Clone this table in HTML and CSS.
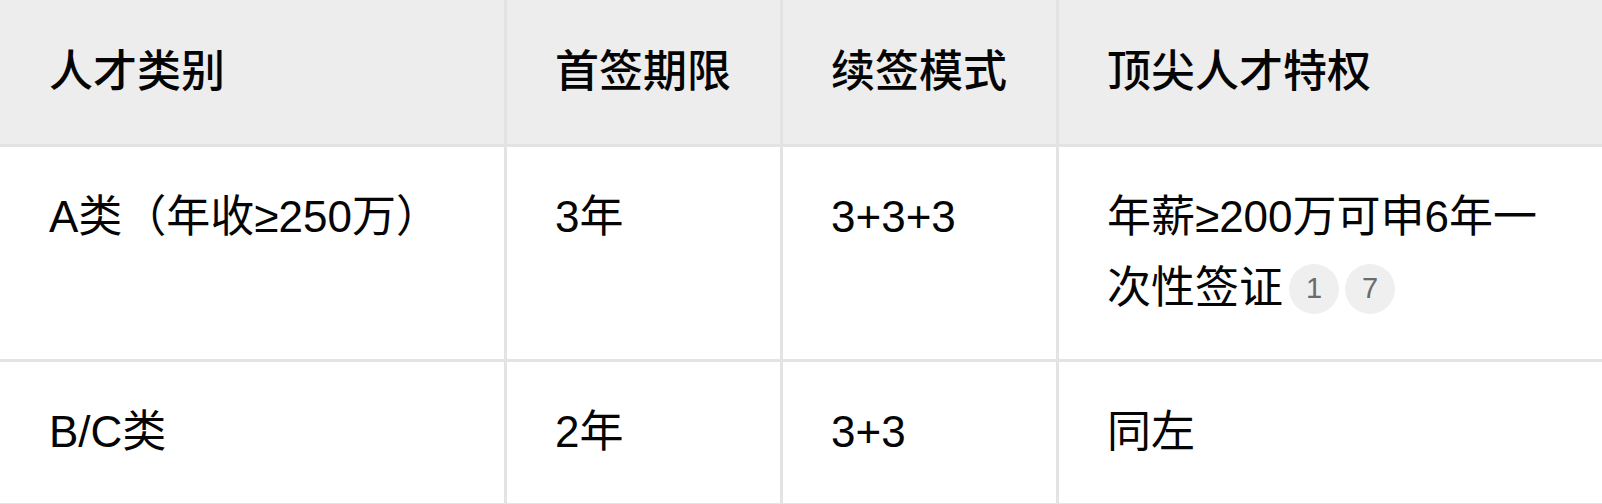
FILE: index.html
```html
<!DOCTYPE html>
<html lang="zh-CN">
<head>
<meta charset="utf-8">
<title>人才签证</title>
<link rel="stylesheet" href="styles.css">
</head>
<body>
<table class="visa-table">
  <colgroup>
    <col class="c1"><col class="c2"><col class="c3"><col class="c4">
  </colgroup>
  <thead>
    <tr>
      <th>人才类别</th>
      <th>首签期限</th>
      <th>续签模式</th>
      <th>顶尖人才特权</th>
    </tr>
  </thead>
  <tbody>
    <tr>
      <td>A类（年收≥250万）</td>
      <td>3年</td>
      <td>3+3+3</td>
      <td>年薪≥200万可申6年一次性签证<span class="cite">1</span><span class="cite">7</span></td>
    </tr>
    <tr>
      <td>B/C类</td>
      <td>2年</td>
      <td>3+3</td>
      <td>同左</td>
    </tr>
  </tbody>
</table>
</body>
</html>
```

FILE: styles.css
```css
html, body {
  margin: 0;
  padding: 0;
  background: #ffffff;
  overflow: hidden;
}

.visa-table {
  border-collapse: separate;
  border-spacing: 0;
  table-layout: fixed;
  width: 1606px;
  font-family: "Liberation Sans", "Noto Sans CJK SC", sans-serif;
  font-size: 44px;
  line-height: 71px;
  color: #050505;
}

.c1 { width: 507px; }
.c2 { width: 276px; }
.c3 { width: 276px; }
.c4 { width: 547px; }

.visa-table th,
.visa-table td {
  text-align: left;
  vertical-align: top;
  padding: 34px 48px 36px 48px;
  border-right: 3px solid #e3e3e3;
  border-bottom: 3px solid #e3e3e3;
}

.visa-table th:first-child,
.visa-table td:first-child {
  padding-left: 49px;
}

.visa-table th {
  background: #ededed;
  font-weight: 500;
  padding-top: 36px;
  padding-bottom: 37px;
}

.cite {
  display: inline-flex;
  align-items: center;
  justify-content: center;
  width: 50px;
  height: 50px;
  margin-left: 6px;
  border-radius: 50%;
  background: #efefef;
  color: #6b6b6b;
  font-size: 29px;
  line-height: 1;
  vertical-align: 5px;
}
```
